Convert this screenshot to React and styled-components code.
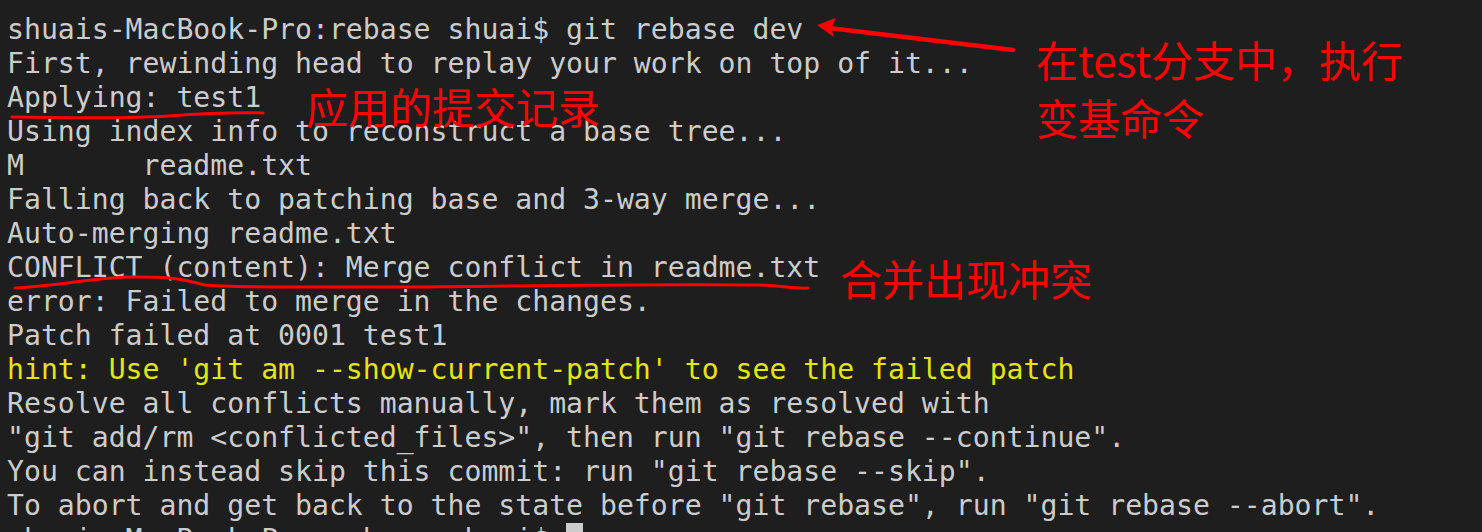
import styled, { createGlobalStyle } from "styled-components"

const Global = createGlobalStyle`
    html, body {
        margin: 0;
        padding: 0;
        background: #1e1e1e;
        overflow: hidden;
    }
`

const Screen = styled.div`
    position: relative;
    width: 1482px;
    height: 532px;
    overflow: hidden;
    background: #1e1e1e;
`

const Terminal = styled.div`
    display: flex;
    flex-direction: column;
    padding: 13px 0 0 7px;
    font-family: "DejaVu Sans Mono", "Liberation Mono", monospace;
    font-size: 28.15px;
    line-height: 34px;
    color: #cccccc;
`

const Line = styled.div`
    white-space: pre;
    height: 34px;
    color: ${(p) => (p.$hint ? "#e5e510" : "#cccccc")};
`

const Cursor = styled.span`
    display: inline-block;
    width: 17px;
    height: 34px;
    vertical-align: top;
    background: #cccccc;
`

const Note = styled.div`
    position: absolute;
    left: ${(p) => p.$x}px;
    top: ${(p) => p.$y}px;
    font-family: "Noto Sans CJK SC", "Noto Sans", sans-serif;
    font-size: 42px;
    line-height: 58px;
    color: #ff0000;
    white-space: pre;
`

const Marks = styled.svg`
    position: absolute;
    left: 0;
    top: 0;
    pointer-events: none;
`

const lines = [
    "shuais-MacBook-Pro:rebase shuai$ git rebase dev",
    "First, rewinding head to replay your work on top of it...",
    "Applying: test1",
    "Using index info to reconstruct a base tree...",
    "M       readme.txt",
    "Falling back to patching base and 3-way merge...",
    "Auto-merging readme.txt",
    "CONFLICT (content): Merge conflict in readme.txt",
    "error: Failed to merge in the changes.",
    "Patch failed at 0001 test1",
    { text: "hint: Use 'git am --show-current-patch' to see the failed patch", hint: true },
    "Resolve all conflicts manually, mark them as resolved with",
    "\"git add/rm <conflicted_files>\", then run \"git rebase --continue\".",
    "You can instead skip this commit: run \"git rebase --skip\".",
    "To abort and get back to the state before \"git rebase\", run \"git rebase --abort\".",
]

const App = () => {
    return (
        <>
            <Global />
            <Screen>
                <Terminal>
                    {lines.map((l, i) =>
                        typeof l === "string" ? (
                            <Line key={i}>{l}</Line>
                        ) : (
                            <Line key={i} $hint>{l.text}</Line>
                        )
                    )}
                    <Line>
                        shuais-MacBook-Pro:rebase shuai$ <Cursor />
                    </Line>
                </Terminal>

                <Marks width="1482" height="532" viewBox="0 0 1482 532">
                    {/* arrow to the command */}
                    <path d="M1013 50 L829 28" stroke="#ff0000" strokeWidth="4.5" strokeLinecap="round" fill="none" />
                    <path d="M817 25 L836 18 L831 28 L834 37 Z" fill="#ff0000" />
                    {/* underline: Applying */}
                    <path
                        d="M12 117 C 70 118, 140 118, 168 116 S 225 112, 263 113"
                        stroke="#ff0000"
                        strokeWidth="3"
                        strokeLinecap="round"
                        fill="none"
                    />
                    {/* underline: CONFLICT */}
                    <path
                        d="M15 288 C 60 286, 95 277, 135 277 S 180 279, 205 285 C 230 288, 300 287, 420 287 C 500 286, 640 284, 760 285 C 785 286, 795 289, 808 288"
                        stroke="#ff0000"
                        strokeWidth="3"
                        strokeLinecap="round"
                        fill="none"
                    />
                </Marks>

                <Note $x={1036} $y={30}>{"在test分支中，执行\n变基命令"}</Note>
                <Note $x={306} $y={77}>应用的提交记录</Note>
                <Note $x={840} $y={249}>合并出现冲突</Note>
            </Screen>
        </>
    )
}

export default App
